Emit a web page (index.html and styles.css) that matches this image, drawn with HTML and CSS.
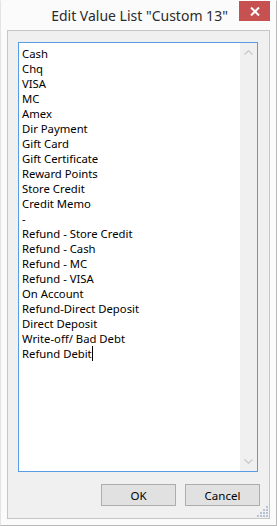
FILE: index.html
```html
<!DOCTYPE html>
<html lang="en">
<head>
    <meta charset="UTF-8">
    <meta name="viewport" content="width=device-width, initial-scale=1.0">
    <title>Edit Value List</title>
    <link rel="stylesheet" href="styles.css">
</head>
<body>
    <div class="window">
        <div class="titlebar">
            <span class="title">Edit Value List "Custom 13"</span>
            <button class="close">
                <svg width="10" height="9" viewBox="0 0 10 9"><path d="M1 0.5 L9 8.5 M9 0.5 L1 8.5" stroke="#fff" stroke-width="2"/></svg>
            </button>
        </div>
        <div class="client">
            <div class="textbox">
                <div class="lines">
                    <div>Cash</div>
                    <div>Chq</div>
                    <div>VISA</div>
                    <div>MC</div>
                    <div>Amex</div>
                    <div>Dir Payment</div>
                    <div>Gift Card</div>
                    <div>Gift Certificate</div>
                    <div>Reward Points</div>
                    <div>Store Credit</div>
                    <div>Credit Memo</div>
                    <div>-</div>
                    <div>Refund - Store Credit</div>
                    <div>Refund - Cash</div>
                    <div>Refund - MC</div>
                    <div>Refund - VISA</div>
                    <div>On Account</div>
                    <div>Refund-Direct Deposit</div>
                    <div>Direct Deposit</div>
                    <div>Write-off/ Bad Debt</div>
                    <div>Refund Debit<span class="caret"></span></div>
                </div>
                <div class="scrollbar">
                    <svg width="9" height="5" viewBox="0 0 9 5"><path d="M0.5 4.5 L4.5 0.8 L8.5 4.5" fill="none" stroke="#c8c8c8" stroke-width="1.2"/></svg>
                    <svg width="9" height="5" viewBox="0 0 9 5"><path d="M0.5 0.5 L4.5 4.2 L8.5 0.5" fill="none" stroke="#c8c8c8" stroke-width="1.2"/></svg>
                </div>
            </div>
            <div class="buttons">
                <button class="btn">OK</button>
                <button class="btn">Cancel</button>
            </div>
        </div>
        <svg class="grip" width="12" height="12" viewBox="0 0 12 12">
            <rect x="9" y="1" width="2" height="2" fill="#b8c4d4"/>
            <rect x="6" y="4" width="2" height="2" fill="#b8c4d4"/>
            <rect x="9" y="4" width="2" height="2" fill="#b8c4d4"/>
            <rect x="3" y="7" width="2" height="2" fill="#b8c4d4"/>
            <rect x="6" y="7" width="2" height="2" fill="#b8c4d4"/>
            <rect x="9" y="7" width="2" height="2" fill="#b8c4d4"/>
            <rect x="0" y="10" width="2" height="2" fill="#b8c4d4"/>
            <rect x="3" y="10" width="2" height="2" fill="#b8c4d4"/>
            <rect x="6" y="10" width="2" height="2" fill="#b8c4d4"/>
            <rect x="9" y="10" width="2" height="2" fill="#b8c4d4"/>
        </svg>
    </div>
</body>
</html>
```

FILE: styles.css
```css
* {
  margin: 0;
  padding: 0;
  box-sizing: border-box;
}
body {
  margin: 0;
  background: #fff;
  font-family: "Noto Sans", "Liberation Sans", sans-serif;
}
.window {
  position: relative;
  width: 277px;
  height: 526px;
  background: #fbfbfb;
  border: 1px solid #b9b9b9;
  border-top-color: #fbfbfb;
  border-left-color: #e4e4e4;
  display: flex;
  flex-direction: column;
  padding: 0 6px 6px 6px;
}
.titlebar {
  height: 29px;
  display: flex;
  align-items: flex-start;
  justify-content: center;
  position: relative;
}
.title {
  font-size: 14px;
  color: #2b2b2b;
  line-height: 20px;
  margin-top: 5px;
  margin-left: 2px;
}
.close {
  position: absolute;
  top: 0;
  right: 0;
  width: 31px;
  height: 20px;
  border: none;
  background: #c75050;
  display: flex;
  align-items: center;
  justify-content: center;
}
.client {
  flex: 1;
  background: #f0f0f0;
  border: 1px solid #c6c6c6;
  padding: 11px 9px 12px 10px;
  display: flex;
  flex-direction: column;
  gap: 12px;
}
.textbox {
  flex: 1;
  margin-right: 2px;
  background: #fff;
  border: 1px solid #569de5;
  display: flex;
}
.lines {
  flex: 1;
  padding: 3px 0 0 3px;
  font-size: 11.3px;
  line-height: 15px;
  color: #000;
}
.caret {
  display: inline-block;
  width: 1px;
  height: 15px;
  background: #000;
  vertical-align: top;
}
.scrollbar {
  width: 17px;
  background: #f0f0f0;
  display: flex;
  flex-direction: column;
  justify-content: space-between;
  align-items: center;
  padding: 7px 0 7px 0;
}
.buttons {
  display: flex;
  justify-content: flex-end;
  gap: 9px;
}
.btn {
  width: 75px;
  height: 22px;
  background: #e1e1e1;
  border: 1px solid #adadad;
  font-family: "Noto Sans", "Liberation Sans", sans-serif;
  font-size: 11.5px;
  color: #000;
}
.grip {
  position: absolute;
  right: 7px;
  bottom: 8px;
}
```
